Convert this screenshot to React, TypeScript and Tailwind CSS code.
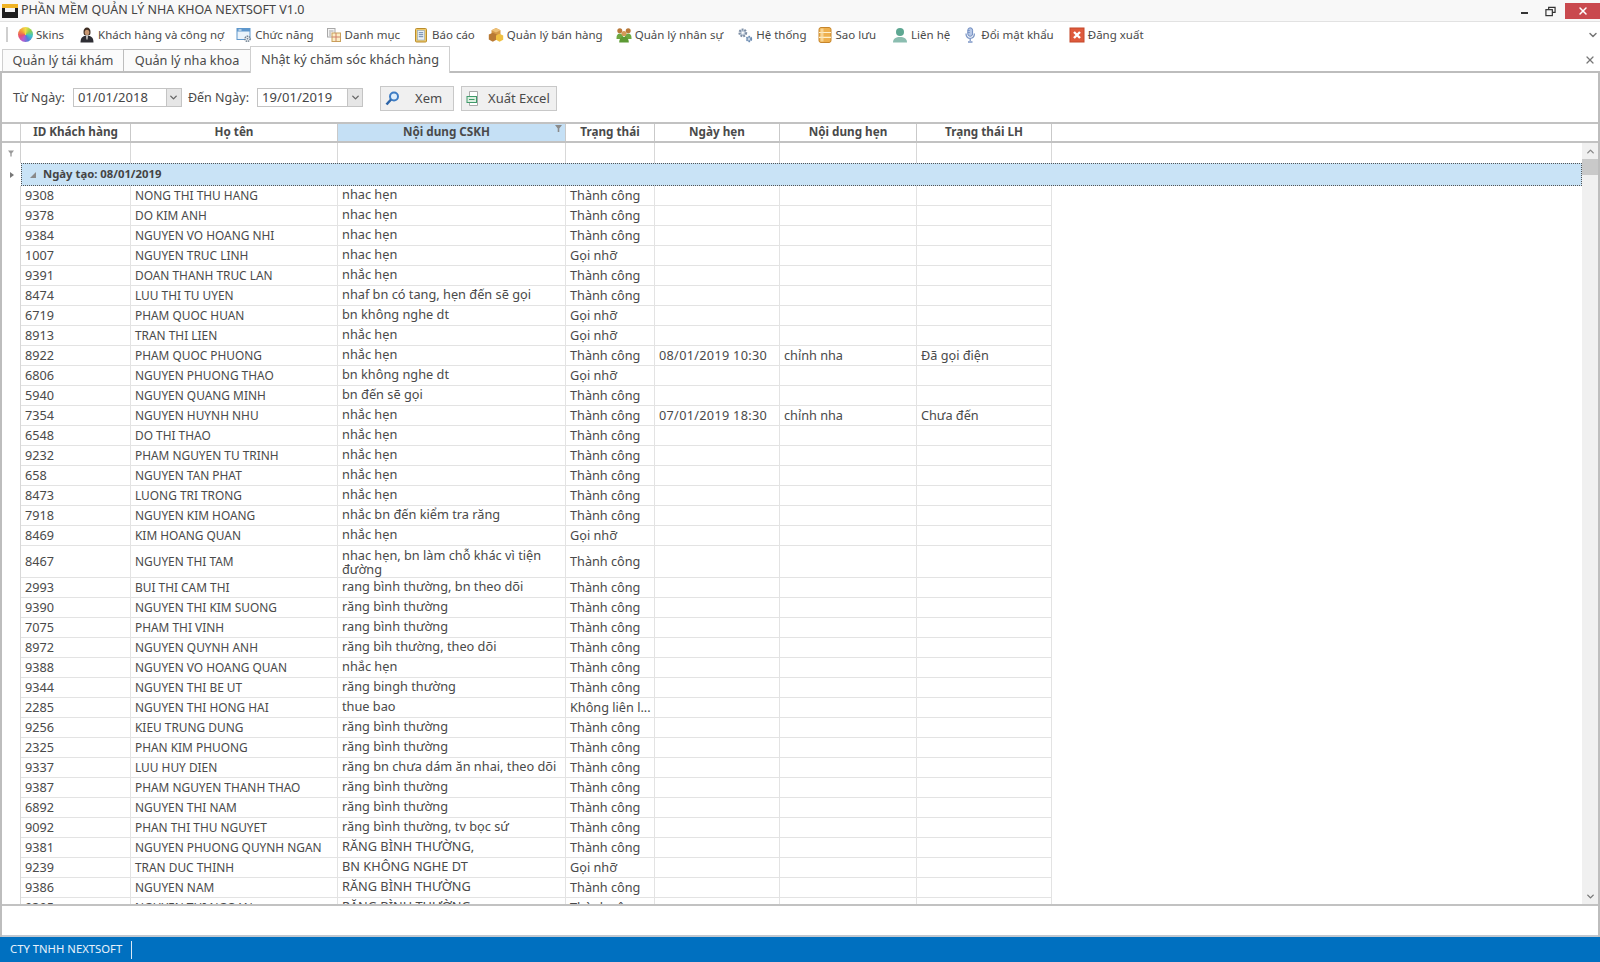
import { ChevronDown, ChevronUp, X } from "lucide-react";

type Row = [string, string, string, string, string?, string?, string?];

const rows: Row[] = [
  ["9308", "NONG THI THU HANG", "nhac hẹn", "Thành công"],
  ["9378", "DO KIM ANH", "nhac hẹn", "Thành công"],
  ["9384", "NGUYEN VO HOANG NHI", "nhac hẹn", "Thành công"],
  ["1007", "NGUYEN TRUC LINH", "nhac hẹn", "Gọi nhỡ"],
  ["9391", "DOAN THANH TRUC LAN", "nhắc hẹn", "Thành công"],
  ["8474", "LUU THI TU UYEN", "nhaf bn có tang, hẹn đến sẽ gọi", "Thành công"],
  ["6719", "PHAM QUOC HUAN", "bn không nghe dt", "Gọi nhỡ"],
  ["8913", "TRAN THI LIEN", "nhắc hẹn", "Gọi nhỡ"],
  ["8922", "PHAM QUOC PHUONG", "nhắc hẹn", "Thành công", "08/01/2019 10:30", "chỉnh nha", "Đã gọi điện"],
  ["6806", "NGUYEN PHUONG THAO", "bn không nghe dt", "Gọi nhỡ"],
  ["5940", "NGUYEN QUANG MINH", "bn đến sẽ gọi", "Thành công"],
  ["7354", "NGUYEN HUYNH NHU", "nhắc hẹn", "Thành công", "07/01/2019 18:30", "chỉnh nha", "Chưa đến"],
  ["6548", "DO THI THAO", "nhắc hẹn", "Thành công"],
  ["9232", "PHAM NGUYEN TU TRINH", "nhắc hẹn", "Thành công"],
  ["658", "NGUYEN TAN PHAT", "nhắc hẹn", "Thành công"],
  ["8473", "LUONG TRI TRONG", "nhắc hẹn", "Thành công"],
  ["7918", "NGUYEN KIM HOANG", "nhắc bn đến kiểm tra răng", "Thành công"],
  ["8469", "KIM HOANG QUAN", "nhắc hẹn", "Gọi nhỡ"],
  ["8467", "NGUYEN THI TAM", "nhac hẹn, bn làm chỗ khác vì tiện đường", "Thành công"],
  ["2993", "BUI THI CAM THI", "rang bình thường, bn theo dõi", "Thành công"],
  ["9390", "NGUYEN THI KIM SUONG", "răng bình thường", "Thành công"],
  ["7075", "PHAM THI VINH", "rang bình thường", "Thành công"],
  ["8972", "NGUYEN QUYNH ANH", "răng bìh thường, theo dõi", "Thành công"],
  ["9388", "NGUYEN VO HOANG QUAN", "nhắc hẹn", "Thành công"],
  ["9344", "NGUYEN THI BE UT", "răng bingh thường", "Thành công"],
  ["2285", "NGUYEN THI HONG HAI", "thue bao", "Không liên l..."],
  ["9256", "KIEU TRUNG DUNG", "răng bình thường", "Thành công"],
  ["2325", "PHAN KIM PHUONG", "răng bình thường", "Thành công"],
  ["9337", "LUU HUY DIEN", "răng bn chưa dám ăn nhai, theo dõi", "Thành công"],
  ["9387", "PHAM NGUYEN THANH THAO", "răng bình thường", "Thành công"],
  ["6892", "NGUYEN THI NAM", "răng bình thường", "Thành công"],
  ["9092", "PHAN THI THU NGUYET", "răng bình thường, tv bọc sứ", "Thành công"],
  ["9381", "NGUYEN PHUONG QUYNH NGAN", "RĂNG BÌNH THƯỜNG,", "Thành công"],
  ["9239", "TRAN DUC THINH", "BN KHÔNG NGHE DT", "Gọi nhỡ"],
  ["9386", "NGUYEN NAM", "RĂNG BÌNH THƯỜNG", "Thành công"],
  ["9395", "NGUYEN THI NGOAN", "RĂNG BÌNH THƯỜNG", "Thành công"],
];

const Ico = ({ children }: { children: React.ReactNode }) => (
  <svg width="16" height="16" viewBox="0 0 16 16" className="shrink-0">{children}</svg>
);

const icons = {
  skins: (
    <div className="h-[15px] w-[15px] shrink-0 rounded-full bg-[conic-gradient(#f2dc4a,#8fd14f,#3fc4c9,#4f7fdc,#b85cd0,#e8506a,#f29a3a,#f2dc4a)]" />
  ),
  customer: (
    <Ico>
      <path d="M4.500 5c0-3 1.500-4.500 3.500-4.500S11.500 2 11.500 5s-1 3-1 3h-5s-1-.5-1-3z" fill="#3d2c22" />
      <ellipse cx="8" cy="5.500" rx="2.300" ry="2.800" fill="#c99872" />
      <path d="M1.500 15.500c0-5 2.500-7 6.500-7s6.500 2 6.500 7z" fill="#2f2f35" />
      <path d="M7 8.500h2l-.4 3.500L8 13l-.6-1z" fill="#d8d4cf" />
    </Ico>
  ),
  feature: (
    <Ico>
      <rect x="1" y="1.500" width="13" height="11" fill="#eaf3fb" stroke="#5f97cc" />
      <rect x="1" y="1.500" width="13" height="3" fill="#5f97cc" />
      <rect x="2.500" y="2.500" width="3" height="1" fill="#fff" />
      <circle cx="11.500" cy="11.800" r="2.600" fill="#e4e9ee" stroke="#6f7f8f" strokeWidth="1.400" strokeDasharray="1.500 0.700" />
      <circle cx="11.500" cy="11.800" r="0.800" fill="#6f7f8f" />
    </Ico>
  ),
  list: (
    <Ico>
      <rect x="1.500" y="1.500" width="7.500" height="8.500" fill="#f5f5f5" stroke="#a8a8a8" />
      <path d="M3 4h4.500M3 6h2M3 8h2" stroke="#a8a8a8" />
      <rect x="6" y="6" width="8.500" height="8.500" fill="#fbeec4" stroke="#c9a05a" />
      <path d="M6 10h8.500M10 6v8.500" stroke="#d0806a" />
    </Ico>
  ),
  report: (
    <Ico>
      <rect x="2.500" y="1.500" width="11" height="13.500" rx="1" fill="#efc969" stroke="#b98c2c" />
      <rect x="4.500" y="3.500" width="7" height="9.500" fill="#e8eff6" stroke="#8ea7c0" strokeWidth="0.600" />
      <path d="M5.800 5.700h4.400M5.800 7.700h4.400M5.800 9.700h4.400" stroke="#6a86a8" />
    </Ico>
  ),
  sales: (
    <Ico>
      <path d="M8 1l4.500 2.200v4.600L8 10 3.500 7.800V3.200z" fill="#d59a48" />
      <path d="M8 1l4.500 2.200L8 5.400 3.500 3.200z" fill="#eec27a" />
      <path d="M.8 7.500l4-1.800 4 1.800v5l-4 2.200-4-2.200z" fill="#b97a34" />
      <path d="M8 8.500l3.500-1.700L15.200 8.500v4.200l-3.700 2-3.500-2z" fill="#f0c040" />
    </Ico>
  ),
  staff: (
    <Ico>
      <circle cx="3.800" cy="3.800" r="2.500" fill="#b9793a" />
      <circle cx="12.200" cy="3.800" r="2.500" fill="#b9793a" />
      <path d="M.5 11c0-3 1.300-4.500 3.300-4.500S7 8 7 9v3H.5zM9 9c0-1 1-2.500 3.200-2.500s3.300 1.500 3.300 4.500v1H9z" fill="#6fa842" />
      <circle cx="8" cy="6.500" r="2.600" fill="#d39a58" />
      <path d="M3.200 15.500c0-4 2-5.800 4.800-5.800s4.800 1.800 4.800 5.800z" fill="#5c9a34" />
    </Ico>
  ),
  system: (
    <Ico>
      <circle cx="5.800" cy="5.800" r="3.300" fill="#c5d0dd" stroke="#7e8fa5" strokeWidth="2.200" strokeDasharray="1.800 1" />
      <circle cx="5.800" cy="5.800" r="1.100" fill="#fff" />
      <circle cx="12" cy="12" r="2.300" fill="#a9bdd4" stroke="#6c8cb2" strokeWidth="1.800" strokeDasharray="1.500 0.800" />
      <circle cx="12" cy="12" r="0.700" fill="#fff" />
    </Ico>
  ),
  backup: (
    <Ico>
      <rect x="2" y="0.500" width="12" height="15" rx="2" fill="#eeb04e" stroke="#c6852b" />
      <path d="M2 5.500h12M2 10.300h12" stroke="#fff1cc" strokeWidth="1.200" />
      <rect x="3.500" y="1.500" width="3" height="13" fill="#fbe3b0" opacity="0.700" />
    </Ico>
  ),
  contact: (
    <Ico>
      <circle cx="8" cy="5" r="4" fill="#5da792" />
      <path d="M1 15.500c0-4 3-5.500 7-5.500s7 1.500 7 5.500z" fill="#8bbdb0" />
    </Ico>
  ),
  password: (
    <Ico>
      <rect x="5.800" y="0.800" width="4.800" height="8.500" rx="2.400" fill="#b6c7e6" stroke="#6f8cc0" />
      <path d="M5.800 3.500h2M5.800 5.500h2" stroke="#6f8cc0" strokeWidth="0.800" />
      <path d="M4 6.500c0 3.500 2 4.800 4.200 4.800s4.200-1.300 4.200-4.800M8.200 11.300V14M6 15h4.500" fill="none" stroke="#7d97c6" strokeWidth="1.300" />
    </Ico>
  ),
  logout: (
    <Ico>
      <rect x="1" y="1" width="14" height="14" fill="#de5a3c" stroke="#c4482b" />
      <path d="M5 5l6 6M11 5l-6 6" stroke="#fff" strokeWidth="2.400" />
    </Ico>
  ),
};

// gaps between toolbar items are not even in the original
const menu: [React.ReactNode, string, string][] = [
  [icons.skins, "Skins", "mr-[15px]"],
  [icons.customer, "Khách hàng và công nợ", "mr-[12px]"],
  [icons.feature, "Chức năng", "mr-[12px]"],
  [icons.list, "Danh mục", "mr-[13px]"],
  [icons.report, "Báo cáo", "mr-[13px]"],
  [icons.sales, "Quản lý bán hàng", "mr-[13px]"],
  [icons.staff, "Quản lý nhân sự", "mr-[14px]"],
  [icons.system, "Hệ thống", "mr-[10px]"],
  [icons.backup, "Sao lưu", "mr-[16px]"],
  [icons.contact, "Liên hệ", "mr-[12px]"],
  [icons.password, "Đổi mật khẩu", "mr-[15px]"],
  [icons.logout, "Đăng xuất", ""],
];

const cols = [
  { title: "ID Khách hàng", w: "w-[110px]" },
  { title: "Họ tên", w: "w-[207px]" },
  { title: "Nội dung CSKH", w: "w-[228px]" },
  { title: "Trạng thái", w: "w-[89px]" },
  { title: "Ngày hẹn", w: "w-[125px]" },
  { title: "Nội dung hẹn", w: "w-[137px]" },
  { title: "Trạng thái LH", w: "w-[135px]" },
];

function DateBox({ value, className }: { value: string; className: string }) {
  return (
    <div className={`flex h-[19px] items-stretch border border-[#c4c4c4] bg-white ${className}`}>
      <span className="flex-1 pl-[4px] text-[13px] leading-[17px] tracking-[0.1px] text-[#444]">{value}</span>
      <span className="flex w-[15px] items-center justify-center border-l border-[#c4c4c4] bg-[#e6e6e6]">
        <ChevronDown size={11} strokeWidth={3} className="text-[#666]" />
      </span>
    </div>
  );
}

export default function App() {
  return (
    <div className="flex h-[962px] w-[1600px] flex-col overflow-hidden bg-white font-['Noto_Sans','Liberation_Sans',sans-serif] text-[12.500px] text-[#4a4a4a]">
      {/* title bar */}
      <div className="flex h-[22px] shrink-0 items-center border-b border-[#e2e2e2] bg-[#f8f8f8]">
        <svg width="16" height="16" viewBox="0 0 16 16" className="ml-[2px] shrink-0">
          <rect x="0" y="1" width="16" height="14" fill="#1d1d1d" />
          <rect x="0" y="1" width="16" height="4" fill="#f0b323" />
          <rect x="3" y="5" width="10" height="4" fill="#f4f4f4" />
        </svg>
        <span className="ml-[3px] text-[12.500px] text-[#444]">PHẦN MỀM QUẢN LÝ NHA KHOA NEXTSOFT V1.0</span>
        <div className="ml-auto flex h-full items-start">
          <div className="mt-[12px] h-[2px] w-[7px] bg-[#333]" />
          <svg width="11" height="11" viewBox="0 0 12 12" className="ml-[17px] mt-[6px]" fill="none" stroke="#333" strokeWidth="1.300">
            <rect x="1" y="4" width="7" height="6.500" />
            <path d="M4 4V1.500h7V7H8" />
          </svg>
          <div className="ml-[9px] mt-[3px] flex h-[16px] w-[35px] items-center justify-center bg-[#c9494e]">
            <X size={12} strokeWidth={3} className="text-white" />
          </div>
        </div>
      </div>

      {/* toolbar */}
      <div className="flex h-[25px] shrink-0 items-center bg-white pl-[6px]">
        <div className="mr-[10px] h-[15px] w-[2px] bg-[#cfcfcf]" />
        {menu.map(([icon, label, gap]) => (
          <div key={label} className={`flex items-center gap-[3px] ${gap}`}>
            {icon}
            <span className="whitespace-nowrap text-[11.500px]">{label}</span>
          </div>
        ))}
        <ChevronDown size={12} strokeWidth={3} className="ml-auto mr-[1px] text-[#777]" />
      </div>

      {/* tabs */}
      <div className="flex h-[24px] shrink-0 items-end">
        <div className="ml-[2px] flex h-[22px] w-[121px] items-center justify-center border-l border-t border-[#cfcfcf] bg-[#fbfbfb] text-[12.700px]">Quản lý tái khám</div>
        <div className="flex h-[22px] w-[127px] items-center justify-center border-l border-t border-[#bdbdbd] bg-[#fbfbfb] text-[12.700px]">Quản lý nha khoa</div>
        <div className="relative z-10 -mb-[2px] flex h-[27px] w-[200px] items-center justify-center border-x border-t border-[#cfcfcf] bg-white text-[12.700px]">Nhật ký chăm sóc khách hàng</div>
        <X size={12} strokeWidth={2.500} className="mb-[5px] ml-auto mr-[4px] text-[#777]" />
      </div>

      {/* page panel */}
      <div className="flex min-h-0 flex-1 flex-col border-x-2 border-t-2 border-[#bdbdbd]">
        <div className="flex h-[49px] shrink-0 items-start pl-[11px] pt-[15px]">
          <span className="mr-[8px] mt-px text-[12.500px]">Từ Ngày:</span>
          <DateBox value="01/01/2018" className="w-[109px]" />
          <span className="ml-[6px] mr-[8px] mt-px text-[12.500px]">Đến Ngày:</span>
          <DateBox value="19/01/2019" className="w-[106px]" />
          <button className="-mt-[2px] ml-[17px] flex h-[25px] w-[74px] items-center border border-[#c8c8c8] bg-[#f0f0f0] pl-[3px]">
            <svg width="17" height="17" viewBox="0 0 17 17" fill="none">
              <circle cx="10" cy="6.500" r="4" stroke="#3d7cc4" strokeWidth="2" fill="#dfeefb" />
              <path d="M7 9.500L2.500 14.500" stroke="#2c64a8" strokeWidth="2.500" />
            </svg>
            <span className="ml-[14px] text-[13px]">Xem</span>
          </button>
          <button className="-mt-[2px] ml-[7px] flex h-[25px] w-[96px] items-center border border-[#c8c8c8] bg-[#f0f0f0] pl-[3px]">
            <svg width="17" height="17" viewBox="0 0 17 17" fill="none">
              <path d="M4.500 1.500h8v14h-8z" fill="#fff" stroke="#a9a9a9" />
              <rect x="2" y="6.500" width="9.500" height="6" fill="#dcefe0" stroke="#3f9a6a" />
              <path d="M4 9.500h5.500" stroke="#3f9a6a" />
            </svg>
            <span className="ml-[6px] text-[13px]">Xuất Excel</span>
          </button>
        </div>

        {/* header */}
        <div className="flex h-[21px] shrink-0 border-y-2 border-[#c2c2c2]">
          <div className="w-[19px] shrink-0 border-r border-[#d0d0d0]" />
          {cols.map((c, i) => (
            <div
              key={c.title}
              className={`relative flex shrink-0 items-center justify-center border-r border-[#c9c9c9] pb-[2px] text-[11.700px] font-bold text-[#4a4a4a] ${c.w} ${i === 2 ? "bg-[#c5e0f5] pr-[10px]" : ""}`}
            >
              {c.title}
              {i === 2 && (
                <svg width="7" height="7" viewBox="0 0 7 7" className="absolute right-[3px] top-[1px]">
                  <path d="M0 0h7L4.300 3.500V7H2.700V3.500z" fill="#8a8a8a" />
                </svg>
              )}
            </div>
          ))}
        </div>

        {/* grid body */}
        <div className="relative flex min-h-0 flex-1 border-b-2 border-[#c2c2c2]">
          <div className="flex min-w-0 flex-1 flex-col overflow-hidden">
            {/* auto filter row */}
            <div className="flex h-[20px] shrink-0">
              <div className="flex w-[19px] shrink-0 items-center justify-center border-r border-[#d0d0d0]">
                <svg width="6" height="7" viewBox="0 0 7 7">
                  <path d="M0 0h7L4.300 3.500V7H2.700V3.500z" fill="#9a9a9a" />
                </svg>
              </div>
              {cols.map((c) => (
                <div key={c.title} className={`shrink-0 border-r border-[#d8d8d8] ${c.w}`} />
              ))}
            </div>
            {/* group row */}
            <div className="flex h-[23px] shrink-0">
              <div className="flex w-[19px] shrink-0 items-center justify-center">
                <span className="h-0 w-0 border-y-[3.500px] border-l-[4px] border-y-transparent border-l-[#777]" />
              </div>
              <div className="flex flex-1 items-center border border-dotted border-[#555] bg-[#c9e3f6] pl-[8px] text-[11.300px] font-bold text-[#444]">
                <svg width="6" height="6" viewBox="0 0 6 6" className="mr-[7px]">
                  <path d="M6 0v6H0z" fill="#8a8a8a" />
                </svg>
                Ngày tạo: 08/01/2019
              </div>
            </div>
            {/* rows */}
            <div className="flex flex-col">
              {rows.map((r) => {
                const tall = r[0] === "8467";
                return (
                  <div key={r[0]} className="flex shrink-0">
                    <div className="w-[19px] shrink-0 border-r border-[#d8d8d8]" />
                    {cols.map((c, i) => (
                      <div
                        key={c.title}
                        className={`flex shrink-0 items-center overflow-hidden whitespace-nowrap border-b border-r border-[#e3e3e3] pl-[4px] ${tall ? "h-[32px]" : "h-[20px]"} ${c.w} ${i === 4 ? "tracking-[0.300px]" : ""}`}
                      >
                        {i === 2 ? (
                          <span className={`text-[12.750px] leading-[14px] ${tall ? "whitespace-normal" : "-mt-[3px]"}`}>{r[2]}</span>
                        ) : (
                          <span className={i === 1 ? "text-[11.900px]" : "text-[12.700px]"}>{r[i]}</span>
                        )}
                      </div>
                    ))}
                  </div>
                );
              })}
            </div>
          </div>
          {/* scrollbar */}
          <div className="flex w-[16px] shrink-0 flex-col items-center bg-[#f0f0f0]">
            <div className="flex h-[16px] w-full items-center justify-center">
              <ChevronUp size={11} strokeWidth={3} className="text-[#888]" />
            </div>
            <div className="h-[16px] w-full bg-[#c9c9c9]" />
            <div className="mt-auto flex h-[16px] w-full items-center justify-center">
              <ChevronDown size={11} strokeWidth={3} className="text-[#777]" />
            </div>
          </div>
        </div>

        {/* empty footer */}
        <div className="h-[31px] shrink-0 border-b-2 border-[#c2c8d0]" />
      </div>

      {/* status bar */}
      <div className="flex h-[25px] shrink-0 items-center bg-[#0070c0] pl-[10px] text-[11.300px] text-[#e8f2fb]">
        <span>CTY TNHH NEXTSOFT</span>
        <span className="ml-[9px] h-[18px] w-px bg-[#d8e8f5]" />
      </div>
    </div>
  );
}
